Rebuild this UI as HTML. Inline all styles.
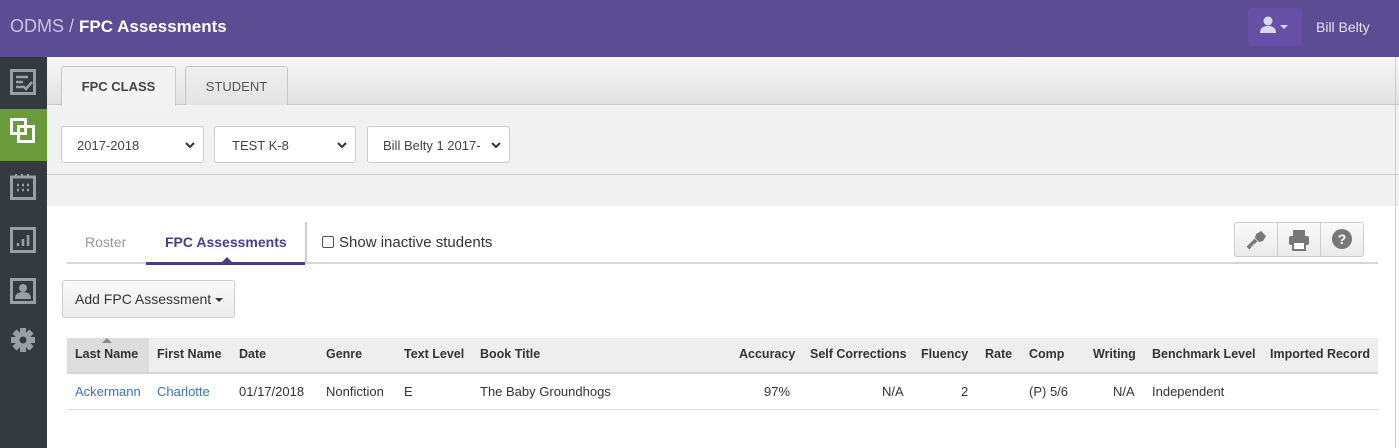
<!DOCTYPE html>
<html><head><style>
*{box-sizing:border-box;margin:0;padding:0}
body{width:1399px;height:448px;overflow:hidden;font-family:"Liberation Sans",Arial,sans-serif;background:#fff;position:relative;color:#333}
.a{position:absolute}
.hdr{left:0;top:0;width:1399px;height:57px;background:#5b4c94}
.side{left:0;top:57px;width:47px;height:391px;background:#343a3e}
.sel{top:126px;height:37px;background:#fff;border:1px solid #ccc;border-radius:3px;font-size:13px;color:#444;padding:11px 0 0 15px}
.sel svg{position:absolute;right:8px;top:14px}
.th{top:347px;font-size:12.5px;font-weight:bold;color:#333}
.td{top:384px;font-size:13px;color:#333}
.lk{color:#3b73b9}
</style></head><body>
<div class="a hdr"></div>
<div class="a" style="left:10px;top:16px;font-size:18px;color:#c9c3e0">ODMS / <span style="color:#fff;font-weight:bold;font-size:17px">FPC Assessments</span></div>
<div class="a" style="left:1248px;top:8px;width:54px;height:38px;background:#6650a8;border-radius:3px"></div>
<svg class="a" style="left:1259px;top:16px" width="30" height="20"><circle cx="9" cy="5" r="4.5" fill="#d8d8e8"/><path d="M1 17 Q1 10 9 10 Q17 10 17 17 Z" fill="#d8d8e8"/><path d="M21 9 L29 9 L25 13 Z" fill="#d8d8e8"/></svg>
<div class="a" style="left:1316px;top:19px;font-size:14px;color:#e6e4f0">Bill Belty</div>

<div class="a side"></div>
<div class="a" style="left:0;top:109px;width:47px;height:52px;background:#6b9a3b"></div>
<svg class="a" style="left:10px;top:69px" width="26" height="26"><rect x="1.5" y="1.5" width="23" height="23" fill="none" stroke="#9a9fa3" stroke-width="3"/><path d="M6 8h12M6 13h7M6 18h7M13 17l3 3 6-7" stroke="#9a9fa3" stroke-width="2.5" fill="none"/></svg>
<svg class="a" style="left:10px;top:118px" width="26" height="26"><rect x="1.5" y="1.5" width="14" height="14" fill="none" stroke="#fff" stroke-width="3"/><rect x="8.5" y="8.5" width="15" height="15" fill="none" stroke="#fff" stroke-width="3"/></svg>
<svg class="a" style="left:10px;top:174px" width="26" height="26"><rect x="1.5" y="3" width="23" height="21.5" fill="none" stroke="#9a9fa3" stroke-width="3"/><path d="M6 0v4M12 0v4M18 0v4" stroke="#9a9fa3" stroke-width="2"/><path d="M7 11h2M12 11h2M17 11h2M7 16h2M12 16h2M17 16h2" stroke="#9a9fa3" stroke-width="2.5"/></svg>
<svg class="a" style="left:10px;top:227px" width="26" height="26"><rect x="1.5" y="1.5" width="23" height="23" fill="none" stroke="#9a9fa3" stroke-width="3"/><path d="M8 19v-3M13 19v-7M18 19v-11" stroke="#9a9fa3" stroke-width="2.5"/></svg>
<svg class="a" style="left:10px;top:278px" width="26" height="26"><rect x="1.5" y="1.5" width="23" height="23" fill="none" stroke="#9a9fa3" stroke-width="3"/><circle cx="13" cy="10" r="4" fill="#9a9fa3"/><path d="M5 21 Q5 14 13 14 Q21 14 21 21Z" fill="#9a9fa3"/></svg>
<svg class="a" style="left:10px;top:327px" width="26" height="26"><g fill="#9a9fa3"><circle cx="13" cy="13" r="8"/><rect x="10" y="1" width="6" height="24"/><rect x="1" y="10" width="24" height="6"/><rect x="10" y="1" width="6" height="24" transform="rotate(45 13 13)"/><rect x="10" y="1" width="6" height="24" transform="rotate(-45 13 13)"/></g><circle cx="13" cy="13" r="3.5" fill="#343a3e"/></svg>

<div class="a" style="left:47px;top:57px;width:1352px;height:149px;background:#f1f1f1"></div>
<div class="a" style="left:47px;top:57px;width:1352px;height:48px;background:linear-gradient(#f7f7f7,#e2e2e2);border-bottom:1px solid #c8c8c8"></div>
<div class="a" style="left:61px;top:66px;width:115px;height:40px;background:#f3f3f3;border:1px solid #c8c8c8;border-bottom:none;border-radius:3px 3px 0 0;font-size:13px;font-weight:bold;color:#444;text-align:center;padding-top:12px">FPC CLASS</div>
<div class="a" style="left:185px;top:66px;width:103px;height:39px;background:linear-gradient(#efefef,#e4e4e4);border:1px solid #c8c8c8;border-bottom:none;border-radius:3px 3px 0 0;font-size:13px;color:#555;text-align:center;padding-top:12px">STUDENT</div>
<div class="a" style="left:47px;top:174px;width:1352px;height:1px;background:#d0d0d0"></div>
<div class="a" style="left:1395px;top:57px;width:1px;height:391px;background:#ccc"></div>
<div class="a sel" style="left:61px;width:143px">2017-2018<svg width="10" height="8"><path d="M1 2l4 4 4-4" stroke="#333" stroke-width="2" fill="none"/></svg></div>
<div class="a sel" style="left:214px;width:142px;padding-left:17px">TEST K-8<svg width="10" height="8"><path d="M1 2l4 4 4-4" stroke="#333" stroke-width="2" fill="none"/></svg></div>
<div class="a sel" style="left:367px;width:143px">Bill Belty 1 2017-<svg width="10" height="8"><path d="M1 2l4 4 4-4" stroke="#333" stroke-width="2" fill="none"/></svg></div>

<div class="a" style="left:67px;top:262px;width:1311px;height:2px;background:#d6d6d6"></div>
<div class="a" style="left:85px;top:234px;font-size:14px;color:#999">Roster</div>
<div class="a" style="left:165px;top:234px;font-size:14px;font-weight:bold;color:#4a3d85">FPC Assessments</div>
<div class="a" style="left:146px;top:262px;width:159px;height:3px;background:#4a3d85"></div>
<div class="a" style="left:221px;top:257px;width:0;height:0;border-left:6px solid transparent;border-right:6px solid transparent;border-bottom:6px solid #4a3d85"></div>
<div class="a" style="left:305px;top:222px;width:2px;height:40px;background:#ccc"></div>
<div class="a" style="left:322px;top:236px;width:12px;height:12px;border:1px solid #555;border-radius:2px;background:#fff"></div>
<div class="a" style="left:339px;top:234px;font-size:15px;color:#333">Show inactive students</div>
<div class="a" style="left:1234px;top:222px;width:130px;height:35px;border:1px solid #ccc;border-radius:3px;background:linear-gradient(#fafafa,#eaeaea)"></div>
<div class="a" style="left:1277px;top:222px;width:1px;height:35px;background:#ccc"></div>
<div class="a" style="left:1320px;top:222px;width:1px;height:35px;background:#ccc"></div>
<svg class="a" style="left:1245px;top:229px" width="22" height="22"><path d="M3 19l8-8" stroke="#777" stroke-width="4"/><path d="M11 5l5-3 5 5-3 5-4 1-4-4z" fill="#777"/><path d="M6 17l2 2M8 15l2 2" stroke="#fff" stroke-width="1"/></svg>
<svg class="a" style="left:1288px;top:229px" width="22" height="22"><rect x="5" y="1" width="12" height="6" fill="#777"/><rect x="1" y="7" width="20" height="9" rx="2" fill="#777"/><rect x="5" y="13" width="12" height="8" fill="#fff" stroke="#777" stroke-width="2"/></svg>
<svg class="a" style="left:1331px;top:228px" width="22" height="22"><circle cx="11" cy="11" r="10" fill="#777"/><text x="11" y="16" font-size="14" font-weight="bold" fill="#fff" text-anchor="middle" font-family="Liberation Sans">?</text></svg>

<div class="a" style="left:62px;top:280px;width:173px;height:38px;border:1px solid #ccc;border-radius:3px;background:linear-gradient(#fafafa,#ececec);font-size:14px;color:#333;padding:10px 0 0 12px">Add FPC Assessment <span style="display:inline-block;border-left:4px solid transparent;border-right:4px solid transparent;border-top:4px solid #333;vertical-align:middle"></span></div>

<div class="a" style="left:67px;top:338px;width:1311px;height:36px;background:#eee;border-bottom:2px solid #d6d6d6"></div>
<div class="a" style="left:67px;top:338px;width:82px;height:36px;background:#ddd;border-bottom:2px solid #d6d6d6"></div>
<div class="a" style="left:102px;top:338px;border-left:5px solid transparent;border-right:5px solid transparent;border-bottom:5px solid #888"></div>
<div class="a" style="left:67px;top:409px;width:1311px;height:1px;background:#ddd"></div>
<div class="a th" style="left:75px">Last Name</div>
<div class="a th" style="left:157px">First Name</div>
<div class="a th" style="left:239px">Date</div>
<div class="a th" style="left:326px">Genre</div>
<div class="a th" style="left:404px">Text Level</div>
<div class="a th" style="left:480px">Book Title</div>
<div class="a th" style="left:739px">Accuracy</div>
<div class="a th" style="left:810px">Self Corrections</div>
<div class="a th" style="left:921px">Fluency</div>
<div class="a th" style="left:985px">Rate</div>
<div class="a th" style="left:1029px">Comp</div>
<div class="a th" style="left:1093px">Writing</div>
<div class="a th" style="left:1152px">Benchmark Level</div>
<div class="a th" style="left:1270px">Imported Record</div>
<div class="a td lk" style="left:75px">Ackermann</div>
<div class="a td lk" style="left:157px">Charlotte</div>
<div class="a td" style="left:239px">01/17/2018</div>
<div class="a td" style="left:326px">Nonfiction</div>
<div class="a td" style="left:404px">E</div>
<div class="a td" style="left:480px">The Baby Groundhogs</div>
<div class="a td" style="left:764px">97%</div>
<div class="a td" style="left:882px">N/A</div>
<div class="a td" style="left:961px">2</div>
<div class="a td" style="left:1029px">(P) 5/6</div>
<div class="a td" style="left:1113px">N/A</div>
<div class="a td" style="left:1152px">Independent</div>
</body></html>
